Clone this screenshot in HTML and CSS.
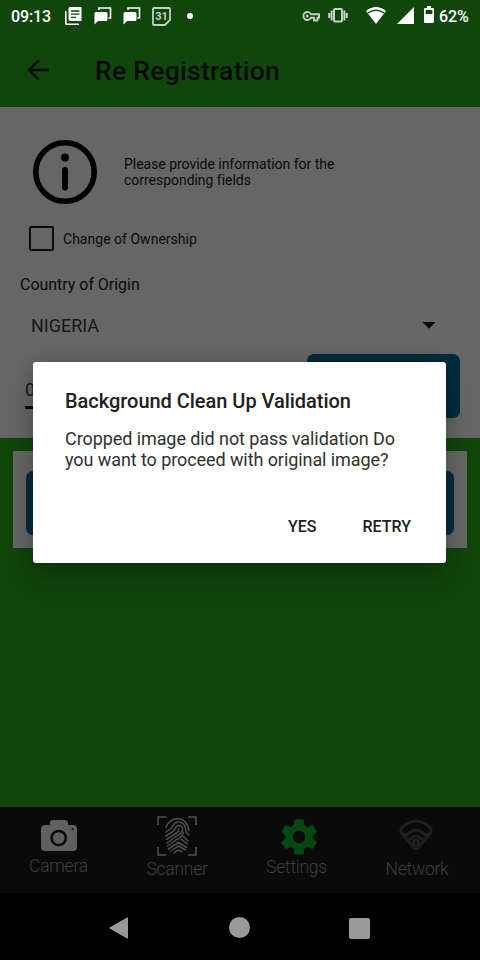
FILE: index.html
```html
<!DOCTYPE html>
<html lang="en">
<head>
<meta charset="utf-8">
<title>Re Registration</title>
<link rel="stylesheet" href="styles.css">
</head>
<body>
<div class="screen">
  <header class="status">
    <span class="clock">09:13</span>
    <svg class="status-news" width="18" height="18" viewBox="0 0 18 18"><path fill="#fff" d="M4.500 0H16.500v14H5.500Q3.500 14 3.500 12V1zM0 4h1.600v12.500H14V18H1.500Q0 18 0 16.500z"/><path stroke="#10450b" stroke-width="1.300" d="M6 4h8.500M6 7.200h8.500M6 10.400h5"/></svg>
    <svg class="status-chat" width="18" height="18" viewBox="0 0 18 18"><path fill="#fff" d="M2 5h10q1.500 0 1.500 1.500v6Q13.500 14 12 14H4l-3.500 3.500v-11Q.5 5 2 5z"/><path fill="none" stroke="#fff" stroke-width="1.600" d="M5 3V1h11.500v10h-2"/></svg>
    <svg class="status-chat" width="18" height="18" viewBox="0 0 18 18"><path fill="#fff" d="M2 5h10q1.500 0 1.500 1.500v6Q13.500 14 12 14H4l-3.500 3.500v-11Q.5 5 2 5z"/><path fill="none" stroke="#fff" stroke-width="1.600" d="M5 3V1h11.500v10h-2"/></svg>
    <span class="calendar"><svg width="19" height="19" viewBox="0 0 19 19"><path fill="none" stroke="#c3d1c2" stroke-width="1.800" d="M2 1h15q1 0 1 1v11l-5 5H2q-1 0-1-1V2q0-1 1-1z"/></svg><b>31</b></span>
    <i class="dot"></i>
    <span class="spacer"></span>
    <svg class="status-key" width="18" height="11" viewBox="0 0 18 11"><path fill="none" stroke="#c3d1c2" stroke-width="1.900" d="M9 3.300H17v3.400h-1.500V9.500h-3.500V6.700H9A4 4 0 1 1 9 3.300z"/><circle cx="5.200" cy="5" r="1.500" fill="#c3d1c2"/></svg>
    <svg class="status-vibrate" width="20" height="15" viewBox="0 0 20 15"><rect x="6" y="1" width="8" height="12.500" rx="1" fill="none" stroke="#c3d1c2" stroke-width="2"/><path stroke="#c3d1c2" stroke-width="2" d="M3.600 2.500v10M16.400 2.500v10M1.200 5v5M18.800 5v5"/></svg>
    <svg class="status-wifi" width="20" height="17" viewBox="0 0 20 17"><path fill="#fff" d="M0 4Q10-4 20 4L10 17z"/><path fill="none" stroke="#10450b" stroke-width="1.500" d="M2 5.800Q10 .8 18 5.800"/></svg>
    <svg class="status-signal" width="17" height="17" viewBox="0 0 17 17"><path fill="#fff" d="M17 0v17H0z"/></svg>
    <svg class="status-battery" width="10" height="17" viewBox="0 0 10 17"><path fill="#fff" d="M3 0h4v2h2q1 0 1 1v13q0 1-1 1H1q-1 0-1-1V3q0-1 1-1h2z"/><path fill="#10450b" d="M1.700 4h6.600v4H1.700z"/></svg>
    <span class="percent">62%</span>
  </header>
  <div class="appbar">
    <svg width="24" height="24" viewBox="0 0 24 24"><path fill="none" stroke="#0a0a0a" stroke-width="2.400" d="M23 12H3M12.800 2.300L3 12l9.800 9.700"/></svg>
    <h1>Re Registration</h1>
  </div>
  <main class="form">
    <div class="intro">
      <svg width="64" height="64" viewBox="0 0 64 64"><circle cx="32" cy="32" r="29.200" fill="none" stroke="#000" stroke-width="5.600"/><circle cx="32" cy="17.500" r="4"/><path stroke="#000" stroke-width="6" stroke-linecap="round" d="M32 30v17.500"/></svg>
      <p>Please provide information for the<br>corresponding fields</p>
    </div>
    <label class="check"><i></i><span>Change of Ownership</span></label>
    <p class="caption">Country of Origin</p>
    <div class="select"><span>NIGERIA</span><svg width="14" height="7" viewBox="0 0 14 7"><path fill="#0a0a0a" d="M.5 0h13L7 6.700z"/></svg></div>
    <div class="entry"><div class="input">0</div><div class="button"></div></div>
  </main>
  <section class="stage"><div class="panel"><div class="button"></div></div></section>
  <nav class="tabs">
    <div class="tab camera"><svg width="36" height="31" viewBox="0 0 36 31"><path fill="#606060" d="M4 5h5V3q0-3 3-3h12q3 0 3 3v2h5q4 0 4 4v18q0 4-4 4H4q-4 0-4-4V9q0-4 4-4z"/><circle cx="17.700" cy="18" r="7.100" fill="#606060" stroke="#0a0a0a" stroke-width="2.500"/><circle cx="31.500" cy="9" r="1" fill="#0a0a0a"/></svg><span>Camera</span></div>
    <div class="tab scanner"><svg width="40" height="40" viewBox="0 0 40 40" fill="none" stroke="#505050"><path stroke-width="1.600" d="M1 9V1h8M31 1h8v8M39 31v8h-8M9 39H1v-8"/><g stroke-width="1.500" stroke-linecap="round"><path d="M9 11Q13 2.500 21 2.500q9 .5 11 12"/><path d="M9 16l5-3.500c2-1.400 2-6.500 7.500-6.500 6 0 7.500 6.500 7.500 10l3 3"/><path d="M9 20l7-4.500c2-1.400 2.500-6 5.500-6 4.500 0 5.500 4.500 2.500 7.500L10 27"/><path d="M9.500 23.500L19.500 17c2-1.200 2.500-3 2-4"/><path d="M10.500 30l9.500-6.500q5-3 6.500-7"/><path d="M26 20l5 5M24 23l6.500 5M11.500 33l10-6.500 8 5M14 35l7.500-5 7 4M17 37q4-5 8-1"/></g></svg><span>Scanner</span></div>
    <div class="tab settings"><svg width="36" height="36" viewBox="0 0 36 36"><path fill="#06480f" fill-rule="evenodd" stroke="#06480f" stroke-linejoin="round" d="M14 1h8l1 5.500 3.300 2 5.200-2 3.800 6.500-4.200 3.500v3l4.200 3.500-3.800 6.500-5.200-2-3.300 2L22 35h-8l-1-5.500-3.300-2-5.200 2L.7 23l4.200-3.500v-3L.7 13l3.800-6.500 5.200 2 3.300-2zM18 11.200a6.800 6.800 0 1 0 0 13.600 6.800 6.800 0 1 0 0-13.600z"/></svg><span>Settings</span></div>
    <div class="tab network"><svg width="34" height="32" viewBox="0 0 34 32" fill="none" stroke="#1f1f1f" stroke-width="3" stroke-linejoin="round"><path d="M2.500 9Q17-5 31.500 9q1.500 3-1 6L20 28q-3 3-6 0L3.500 15q-2.500-3-1-6z"/><path d="M5 15.500q3 1 5-1.500 7-6 14 0 2 2.500 5 1.500M9.500 20q3 .5 5-2.500 2.500-1.500 5 0 2 3 5 2.500"/><circle cx="17" cy="24" r="2.500"/></svg><span>Network</span></div>
  </nav>
  <footer class="system">
    <svg width="19" height="22" viewBox="0 0 19 22"><path fill="#999" stroke="#999" stroke-linejoin="round" d="M18.500.8v20.400L.7 11z"/></svg>
    <i class="home"></i><i class="recent"></i>
  </footer>
  <div class="dialog" role="dialog">
    <h2>Background Clean Up Validation</h2>
    <p>Cropped image did not pass validation Do<br>you want to proceed with original image?</p>
    <div class="actions"><span class="yes">YES</span><span class="retry">RETRY</span></div>
  </div>
</div>
</body>
</html>
```

FILE: styles.css
```css
* { box-sizing: border-box; }
body { margin: 0; font-family: Roboto, sans-serif; color: #0a0a0a; }
h1, h2, p { margin: 0; font-weight: 400; }
svg { display: block; flex: none; }
span { white-space: nowrap; }
.screen { position: relative; display: flex; flex-direction: column; width: 480px; height: 960px; overflow: hidden; background: #10450b; }
.status { display: flex; align-items: flex-start; height: 32px; padding: 7px 11px 0; color: #fff; font-size: 16px; line-height: 19px; font-weight: 500; }
.clock { width: 55px; letter-spacing: -.1px; }
.status-chat { margin-left: 11px; }
.calendar { position: relative; margin-left: 11px; }
.calendar b { position: absolute; inset: 0; color: #c3d1c2; font-size: 11px; line-height: 19px; text-align: center; font-weight: 700; }
.dot { width: 6px; height: 6px; margin: 6px 0 0 16px; border-radius: 50%; background: #fff; }
.spacer { flex: 1; }
.status-key { margin-top: 4px; }
.status-vibrate { margin: 1px 0 0 8px; }
.status-wifi { margin-left: 18px; }
.status-signal { margin-left: 11px; }
.status-battery { margin: -1px 0 0 10px; }
.percent { width: 30px; margin-left: 5px; letter-spacing: -.15px; }
.status-news { margin-left: -1px; }
.appbar { display: flex; align-items: center; height: 75px; padding: 1px 0 0 26px; }
.appbar h1 { margin: 0 0 0 45px; font-size: 26.6px; font-weight: 500; letter-spacing: .22px; }
.form { height: 331px; background: #666; }
.intro { display: flex; height: 97px; padding: 33px 33px 0; }
.intro p { margin: 16px 0 0 27px; font-size: 14px; line-height: 16px; letter-spacing: -.03px; }
.check { display: flex; align-items: center; height: 24px; margin: 22px 0 0 29px; font-size: 14px; }
.check i { width: 25px; height: 25px; margin-right: 9px; border: 2.500px solid #0a0a0a; border-radius: 2px; }
.check span { letter-spacing: .02px; margin-top: 2px; }
.caption { margin: 25px 0 0 20px; font-size: 16px; line-height: 19px; letter-spacing: -.03px; }
.select { display: flex; align-items: center; justify-content: space-between; height: 60px; padding: 2px 44px 0 31px; font-size: 18px; color: #171717; }
.entry { display: flex; justify-content: space-between; padding-left: 25px; padding-right: 20px; }
.input { width: 270px; height: 55px; padding-top: 25px; border-bottom: 3px solid #0a0a0a; font-size: 18px; line-height: 21px; color: #171717; }
.button { height: 64px; border-radius: 7px; background: #002c3e; }
.entry .button { width: 153px; }
.stage { height: 369px; padding: 13px 13px 0; }
.panel { height: 97px; padding: 20px 13px 0; background: #666; }
.tabs { display: grid; grid-template-columns: 117px 120px 119px 122px; height: 86px; background: #0a0a0a; color: #404040; font-size: 17.5px; line-height: 21px; font-weight: 300; letter-spacing: -.25px; }
.tab { display: flex; flex-direction: column; align-items: center; }
.camera { padding-top: 13px; }
.camera span { margin-top: 5px; }
.scanner { padding-top: 9px; }
.scanner span { margin-top: 3px; }
.settings { padding-top: 12px; }
.settings svg { margin-left: 5px; }
.settings span { margin-top: 2px; }
.network { padding-top: 12px; }
.network svg { margin-right: 2px; }
.network span { margin-top: 8px; }
.system { display: flex; align-items: flex-start; height: 67px; padding: 24px 0 0 109px; background: #000; }
.home { width: 21px; height: 21px; margin: 0 0 0 101px; border-radius: 50%; background: #999; }
.recent { width: 21px; height: 21px; margin: 1px 0 0 99px; border-radius: 2px; background: #999; }
.dialog { position: absolute; left: 33px; top: 362px; width: 413px; height: 201px; padding: 26px 32px 0; border-radius: 3px; background: #fff; box-shadow: 0 14px 28px rgba(0,0,0,.2), 0 0 18px rgba(0,0,0,.14); color: #202020; }
.dialog h2 { font-size: 20px; line-height: 26px; font-weight: 500; white-space: nowrap; letter-spacing: -.03px; }
.dialog p { margin-top: 14px; font-size: 18px; line-height: 21px; color: #303030; white-space: nowrap; letter-spacing: -.08px; }
.actions { display: flex; justify-content: flex-end; margin-top: 47px; font-size: 16px; line-height: 19px; font-weight: 500; }
.yes { margin-right: 46px; }
.retry { margin-right: 3px; }
```
